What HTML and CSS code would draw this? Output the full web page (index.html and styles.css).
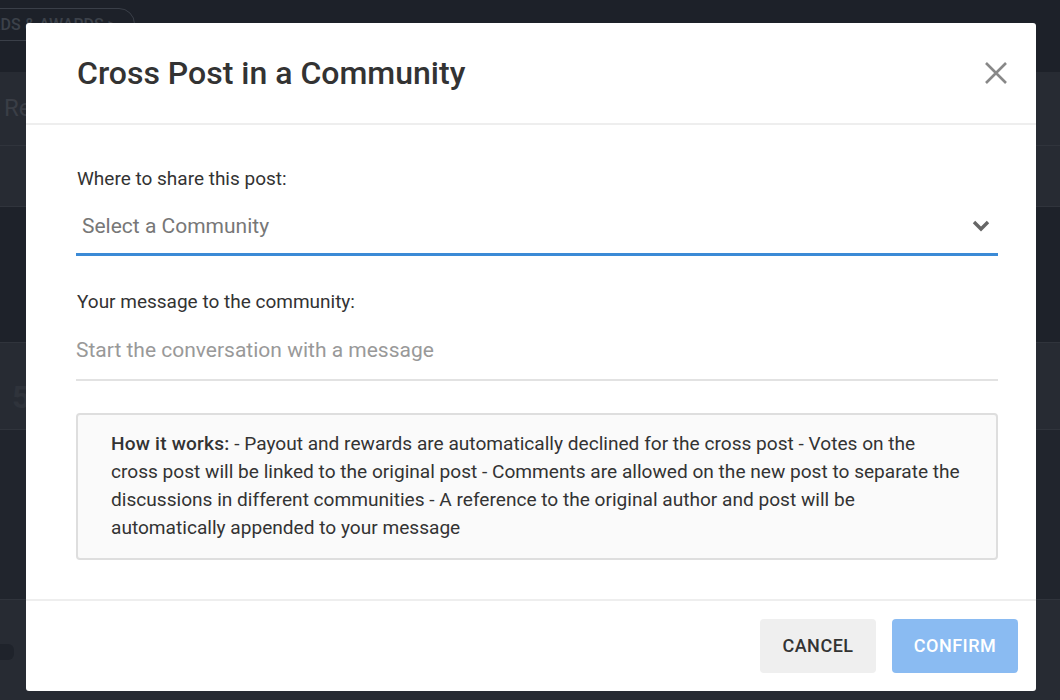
FILE: index.html
```html
<!DOCTYPE html>
<html>
<head>
<meta name="viewport" content="width=device-width, initial-scale=1">
<link rel="stylesheet" href="styles.css">
</head>
<body>

<div class="page">
  <div class="topbar">
    <span class="pill">REWARDS &amp; AWARDS &gt;</span>
  </div>
  <div class="row row-a"><span class="ghost">Re</span></div>
  <div class="row row-b"></div>
  <div class="row row-c"></div>
  <div class="row row-d"><span class="ghost big">5</span></div>
  <div class="row row-e"></div>
  <div class="row row-f"><span class="chip"></span></div>
</div>

<div class="overlay">
  <div class="modal">
    <div class="modal-header">
      <h2 class="modal-title">Cross Post in a Community</h2>
      <span class="close">
        <svg width="24" height="24" viewBox="0 0 24 24"><path d="M2 2 L22 22 M22 2 L2 22" stroke="#888" stroke-width="2.6" fill="none"/></svg>
      </span>
    </div>

    <div class="modal-body">
      <div class="label">Where to share this post:</div>
      <div class="select">
        <span class="placeholder">Select a Community</span>
        <svg width="18" height="12" viewBox="0 0 18 12"><path d="M2 2 L9 9 L16 2" stroke="#666" stroke-width="3.4" fill="none"/></svg>
      </div>

      <div class="label second">Your message to the community:</div>
      <div class="message">Start the conversation with a message</div>

      <div class="info">
        <b>How it works:</b> - Payout and rewards are automatically declined for the cross post - Votes on the cross post will be linked to the original post - Comments are allowed on the new post to separate the discussions in different communities - A reference to the original author and post will be automatically appended to your message
      </div>
    </div>

    <div class="modal-footer">
      <span class="btn cancel">Cancel</span>
      <span class="btn confirm">Confirm</span>
    </div>
  </div>
</div>

</body>
</html>
```

FILE: styles.css
```css
* {
  box-sizing: border-box;
}

body {
  margin: 0;
  background: #272b33;
  font-family: Roboto, "Liberation Sans", sans-serif;
  overflow: hidden;
}

/* Page behind the dialog */
.page {
  height: 700px;
  overflow: hidden;
}
.topbar {
  height: 72px;
  background: #1d2129;
  padding: 8px 0 0 0;
}
.pill {
  display: inline-block;
  margin-left: -72px;
  padding: 6px 18px;
  border: 1px solid #3a3f48;
  border-radius: 16px;
  color: #3c414a;
  font-size: 16px;
  font-weight: 500;
}
.row {
  border-bottom: 1px solid #30343c;
}
.ghost {
  color: #3a3e46;
  font-size: 24px;
  padding-left: 4px;
  line-height: 72px;
}
.ghost.big {
  font-size: 32px;
  font-weight: 700;
  color: #2f333b;
  padding-left: 12px;
  line-height: 108px;
}
.chip {
  display: block;
  margin-top: 44px;
  width: 14px;
  height: 16px;
  border-radius: 0 6px 6px 0;
  background: #1f232b;
}
.row-a { height: 74px; }
.row-b { height: 61px; }
.row-c { height: 136px; background: #1e222a; }
.row-d { height: 87px; }
.row-e { height: 170px; background: #21252d; }
.row-f { height: 90px; }

/* Dialog */
.overlay {
  position: fixed;
  top: 0;
  left: 0;
  right: 0;
  bottom: 0;
}
.modal {
  margin: 23px 0 0 26px;
  width: 1010px;
  height: 668px;
  background: #fff;
  border-radius: 3px;
  color: #333;
}

.modal-header {
  height: 102px;
  border-bottom: 2px solid #eee;
  display: flex;
  align-items: center;
  justify-content: space-between;
  padding: 0 28px 0 51px;
}
.modal-title {
  margin: 0;
  font-size: 32px;
  font-weight: 500;
  color: #333;
}
.close {
  display: flex;
  cursor: pointer;
}

.modal-body {
  padding: 40px 38px 0 50px;
  height: 476px;
  border-bottom: 2px solid #eee;
}
.label {
  font-size: 19px;
  line-height: 28px;
  padding-left: 1px;
}
.label.second {
  margin-top: 32px;
}
.select {
  display: flex;
  align-items: center;
  justify-content: space-between;
  height: 63px;
  padding: 6px 8px 0 6px;
  border-bottom: 3px solid #3b8ad6;
}
.placeholder {
  font-size: 21px;
  color: #777;
}
.message {
  font-size: 21px;
  color: #999;
  height: 65px;
  padding-top: 10px;
  line-height: 48px;
  border-bottom: 2px solid #e2e2e2;
}

.info {
  margin-top: 32px;
  border: 2px solid #dedede;
  border-radius: 4px;
  background: #fafafa;
  padding: 15px 33px 16px 33px;
  font-size: 19.1px;
  line-height: 28px;
  color: #333;
}
.info b {
  font-weight: 500;
  letter-spacing: 0.2px;
}

.modal-footer {
  display: flex;
  justify-content: flex-end;
  gap: 16px;
  padding: 18px 18px 0 0;
}
.btn {
  height: 54px;
  line-height: 54px;
  border-radius: 4px;
  font-size: 18px;
  font-weight: 500;
  text-transform: uppercase;
  letter-spacing: 0.5px;
  text-align: center;
  cursor: pointer;
}
.cancel {
  width: 116px;
  background: #efefef;
  color: #333;
}
.confirm {
  width: 126px;
  background: #8abbf2;
  color: #fff;
}
```
